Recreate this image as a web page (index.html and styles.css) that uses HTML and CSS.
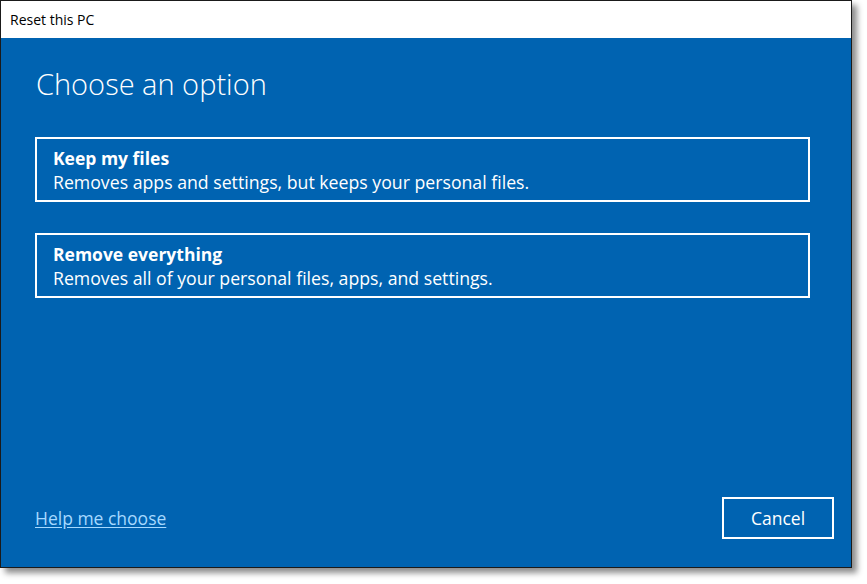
FILE: index.html
```html
<!DOCTYPE html>
<html>
<head>
<meta charset="utf-8">
<link rel="stylesheet" href="styles.css">
</head>
<body>
<div class="window">
  <div class="titlebar">Reset this PC</div>
  <div class="content">
    <h1 class="heading">Choose an option</h1>
    <div class="options">
      <div class="option">
        <div class="option-title">Keep my files</div>
        <div class="option-desc">Removes apps and settings, but keeps your personal files.</div>
      </div>
      <div class="option">
        <div class="option-title">Remove everything</div>
        <div class="option-desc">Removes all of your personal files, apps, and settings.</div>
      </div>
    </div>
    <div class="footer">
      <a class="help" href="#">Help me choose</a>
      <button class="cancel">Cancel</button>
    </div>
  </div>
</div>
</body>
</html>
```
FILE: styles.css
```css
html, body {
  margin: 0;
  padding: 0;
  background: #ffffff;
}
body {
  font-family: "Open Sans", "Noto Sans", sans-serif;
  width: 867px;
  height: 584px;
  overflow: hidden;
}
.window {
  width: 850px;
  height: 566px;
  border: 1px solid #1a1a1a;
  box-shadow: 5px 5px 6px rgba(0, 0, 0, 0.45);
  display: flex;
  flex-direction: column;
}
.titlebar {
  height: 37px;
  background: #ffffff;
  color: #000;
  font-size: 14px;
  line-height: 37px;
  padding-left: 9px;
  box-sizing: border-box;
}
.content {
  flex: 1;
  background: #0063b1;
  display: flex;
  flex-direction: column;
  padding: 0 17px 28px 34px;
}
.heading {
  margin: 25px 0 0 1px;
  font-weight: 300;
  font-size: 29px;
  line-height: 42px;
  color: #ffffff;
}
.options {
  margin-top: 32px;
  margin-right: 24px;
  display: flex;
  flex-direction: column;
  gap: 31px;
}
.option {
  border: 2px solid #ffffff;
  height: 65px;
  box-sizing: border-box;
  padding: 8px 16px 0;
  color: #ffffff;
}
.option-title {
  font-weight: 700;
  font-size: 17.5px;
  line-height: 23px;
}
.option-desc {
  font-size: 17.7px;
  line-height: 25px;
}
.footer {
  margin-top: auto;
  display: flex;
  justify-content: space-between;
  align-items: center;
}
.help {
  color: #a6d9ff;
  font-size: 17.5px;
  text-decoration: underline;
  text-underline-offset: 2px;
}
.cancel {
  width: 112px;
  height: 42px;
  border: 2px solid #ffffff;
  background: transparent;
  color: #ffffff;
  font-family: "Open Sans", "Noto Sans", sans-serif;
  font-size: 17.5px;
  padding: 0;
}
```
